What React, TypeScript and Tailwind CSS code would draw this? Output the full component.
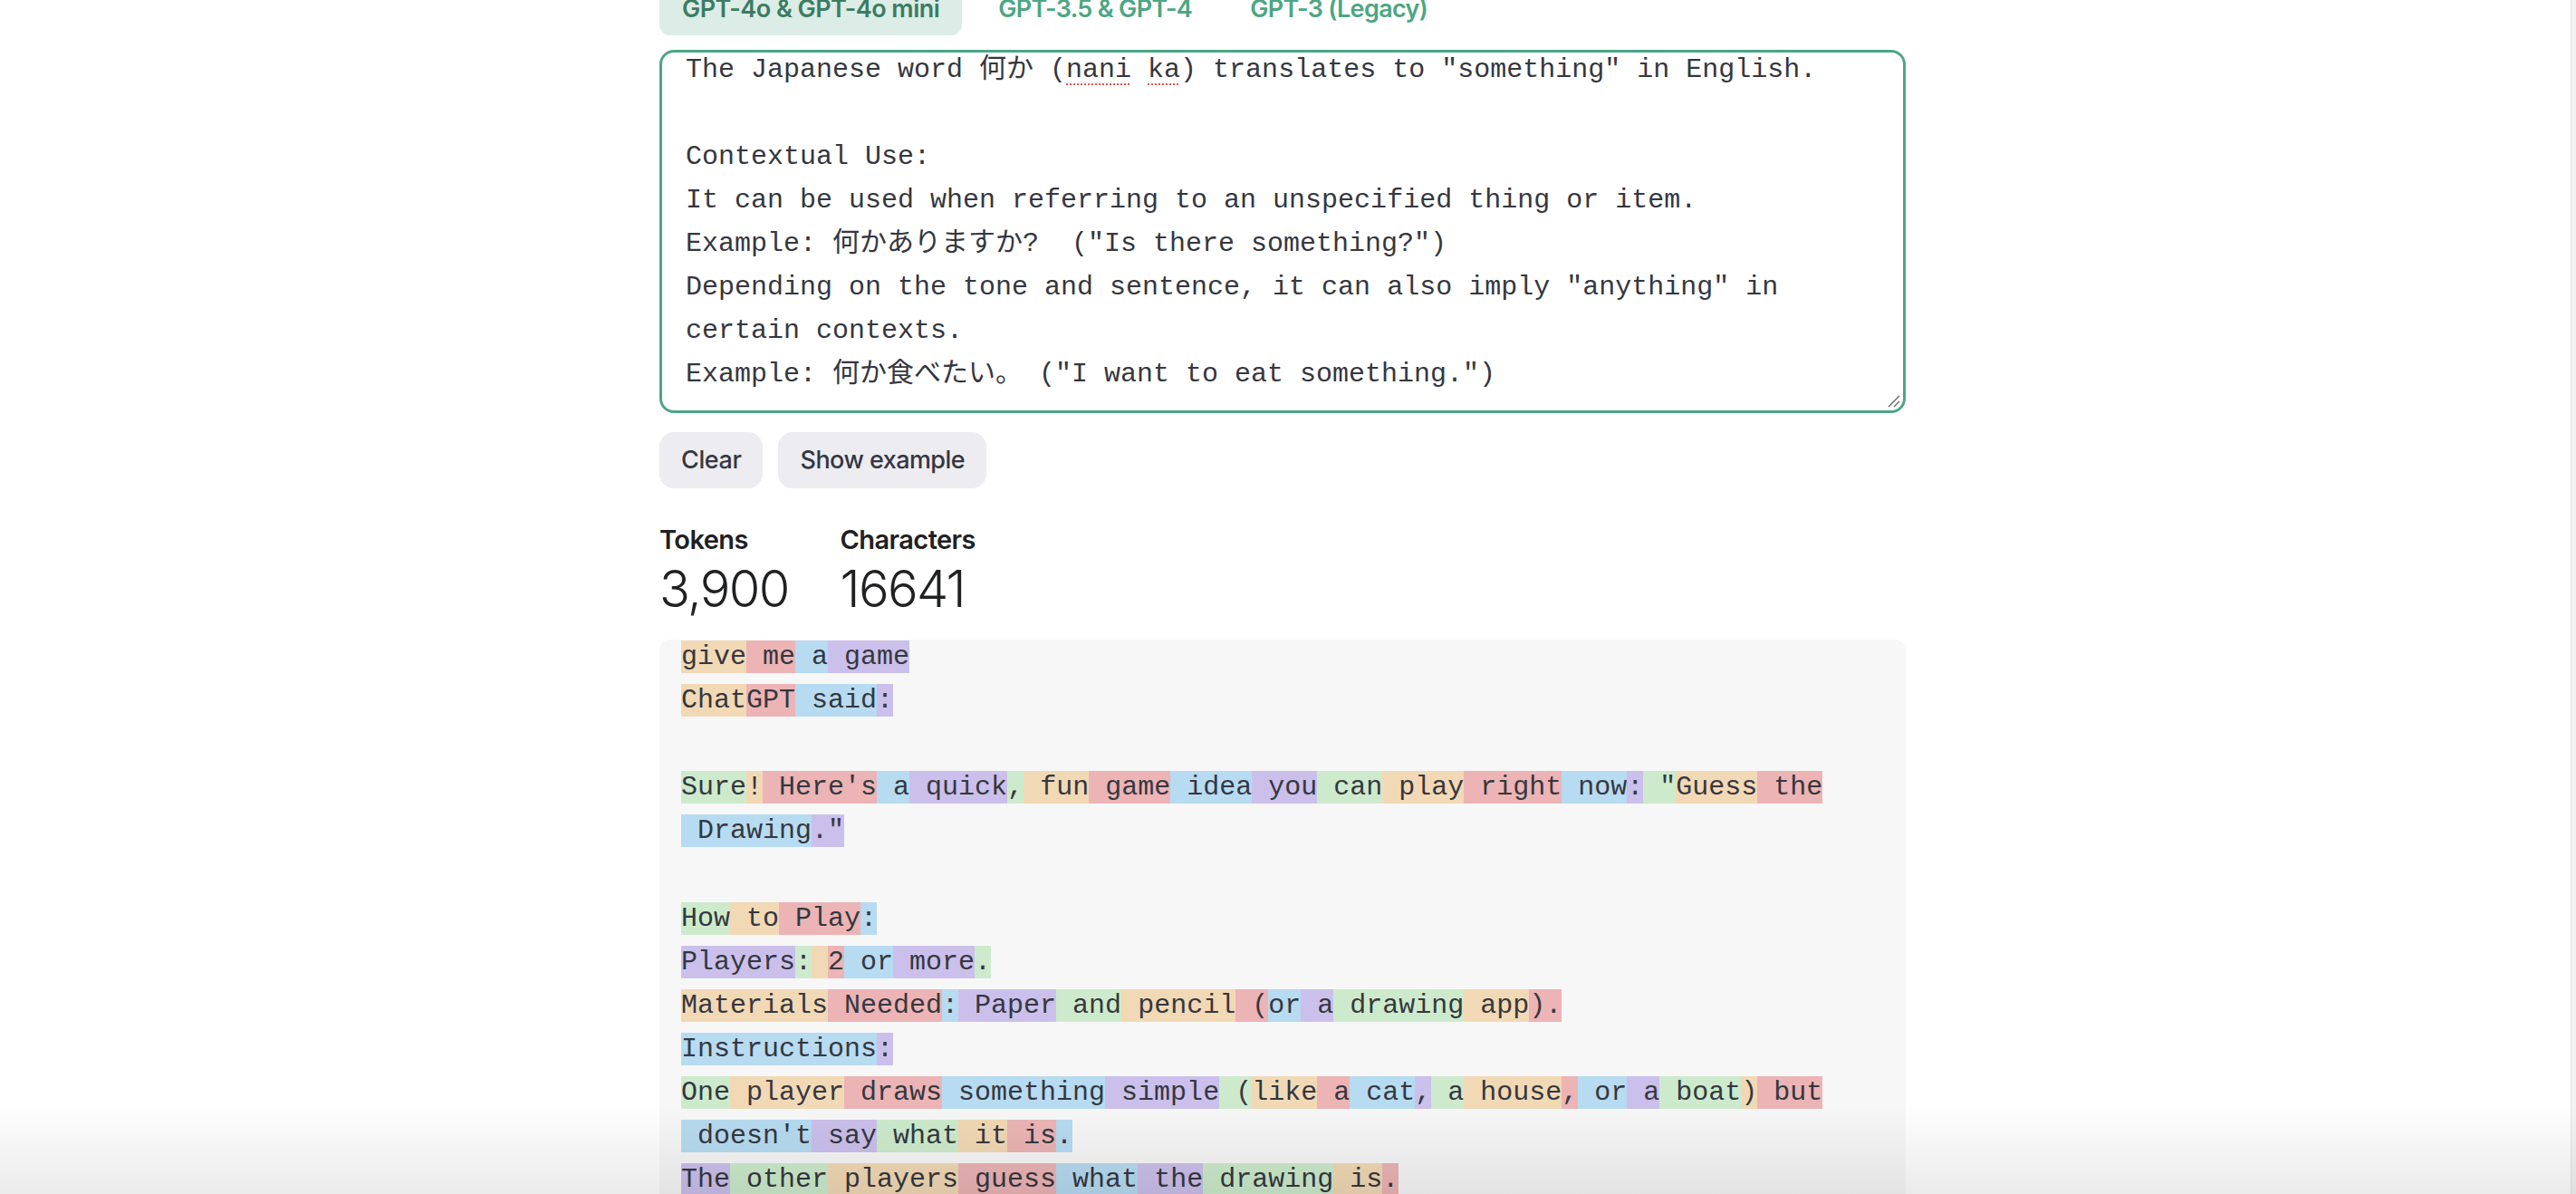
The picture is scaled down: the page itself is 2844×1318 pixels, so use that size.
import React from "react";

type Tone = "o" | "r" | "b" | "p" | "g";

const toneClass: Record<Tone, string> = {
  o: "bg-[#f2d9b5]",
  r: "bg-[#ecb4b5]",
  b: "bg-[#b7dbf1]",
  p: "bg-[#cbc0eb]",
  g: "bg-[#cdebcc]",
};

// each inner array is one paragraph of the tokenized output; null = blank line
const paragraphs: ([string, Tone][] | null)[] = [
  [["give", "o"], [" me", "r"], [" a", "b"], [" game", "p"]],
  [["Chat", "o"], ["GPT", "r"], [" said", "b"], [":", "p"]],
  null,
  [
    ["Sure", "g"], ["!", "o"], [" Here's", "r"], [" a", "b"], [" quick", "p"], [",", "g"],
    [" fun", "o"], [" game", "r"], [" idea", "b"], [" you", "p"], [" can", "g"], [" play", "o"],
    [" right", "r"], [" now", "b"], [":", "p"], [' "', "g"], ["Guess", "o"], [" the", "r"],
    [" Drawing", "b"], ['."', "p"],
  ],
  null,
  [["How", "g"], [" to", "o"], [" Play", "r"], [":", "b"]],
  [["Players", "p"], [":", "g"], [" ", "o"], ["2", "r"], [" or", "b"], [" more", "p"], [".", "g"]],
  [
    ["Materials", "o"], [" Needed", "r"], [":", "b"], [" Paper", "p"], [" and", "g"], [" pencil", "o"],
    [" (", "r"], ["or", "b"], [" a", "p"], [" drawing", "g"], [" app", "o"], [").", "r"],
  ],
  [["Instructions", "b"], [":", "p"]],
  [
    ["One", "g"], [" player", "o"], [" draws", "r"], [" something", "b"], [" simple", "p"], [" (", "g"],
    ["like", "o"], [" a", "r"], [" cat", "b"], [",", "p"], [" a", "g"], [" house", "o"], [",", "r"],
    [" or", "b"], [" a", "p"], [" boat", "g"], [")", "o"], [" but", "r"], [" doesn't", "b"],
    [" say", "p"], [" what", "g"], [" it", "o"], [" is", "r"], [".", "b"],
  ],
  [
    ["The", "p"], [" other", "g"], [" players", "o"], [" guess", "r"], [" what", "b"], [" the", "p"],
    [" drawing", "g"], [" is", "o"], [".", "r"],
  ],
];

const tabs = ["GPT-4o & GPT-4o mini", "GPT-3.5 & GPT-4", "GPT-3 (Legacy)"];

const spell = "underline decoration-dotted decoration-[#e5534b] decoration-2 underline-offset-[7px]";

function InputBox() {
  return (
    <div className="relative mt-[16px] h-[401px] w-[1376px] overflow-hidden rounded-[16px] border-[3px] border-[#4ea585] bg-white pl-[26px] pr-[26px]">
      <div className="-mt-[5px] whitespace-pre-wrap font-['Liberation_Mono','Noto_Sans_CJK_JP',monospace] text-[30px] leading-[48px] text-[#353740]">
        <div>
          The Japanese word 何か (<span className={spell}>nani</span> <span className={spell}>ka</span>) translates to "something" in English.
        </div>
        <div className="h-[48px]" />
        <div>Contextual Use:</div>
        <div>It can be used when referring to an unspecified thing or item.</div>
        <div>Example: 何かありますか?  ("Is there something?")</div>
        <div>Depending on the tone and sentence, it can also imply "anything" in certain contexts.</div>
        <div>Example: 何か食べたい。 ("I want to eat something.")</div>
      </div>
      <svg className="absolute bottom-[3px] right-[3px] h-[14px] w-[14px]" viewBox="0 0 14 14">
        <line x1="1" y1="13" x2="13" y2="1" stroke="#6b6b6b" strokeWidth="1.5" />
        <line x1="7" y1="13" x2="13" y2="7" stroke="#6b6b6b" strokeWidth="1.5" />
      </svg>
    </div>
  );
}

function TokenBox() {
  return (
    <div className="mt-[20px] h-[640px] w-[1376px] overflow-hidden rounded-[12px] bg-[#f7f7f8] px-[24px]">
      <div className="-mt-[5px] font-['Liberation_Mono',monospace] text-[30px] leading-[48.1px] text-[#353740]">
        {paragraphs.map((p, i) =>
          p === null ? (
            <div key={i} className="h-[48.1px]" />
          ) : (
            <div key={i}>
              {p.map(([text, tone], j) => (
                <span
                  key={j}
                  className={`inline-block h-[36px] whitespace-pre leading-[36px] ${toneClass[tone]}`}
                >
                  {text}
                </span>
              ))}
            </div>
          )
        )}
      </div>
    </div>
  );
}

export default function App() {
  return (
    <div className="relative flex h-[1318px] w-full overflow-hidden bg-white font-['Inter',sans-serif]">
      <div className="flex-1 pl-[728px]">
        <div className="-mt-[21px] flex gap-[16px]">
          {tabs.map((t, i) => (
            <div
              key={t}
              className={
                i === 0
                  ? "flex h-[60px] items-center rounded-[12px] bg-[#dcece6] px-[25px] pt-[2px] text-[27px] font-semibold tracking-[-0.02em] text-[#3b7c62]"
                  : "flex h-[60px] items-center rounded-[12px] px-[24px] pt-[2px] text-[27px] font-semibold tracking-[-0.025em] text-[#4ca683]"
              }
            >
              {t}
            </div>
          ))}
        </div>

        <InputBox />

        <div className="mt-[21px] flex gap-[17px]">
          <button className="h-[62px] rounded-[16px] bg-[#ececf1] px-[24px] text-[27px] font-medium tracking-[-0.015em] text-[#353740]">
            Clear
          </button>
          <button className="h-[62px] rounded-[16px] bg-[#ececf1] px-[24px] text-[27px] font-medium tracking-[-0.02em] text-[#353740]">
            Show example
          </button>
        </div>

        <div className="mt-[39px] flex gap-[57px] text-[#202123]">
          <div className="flex flex-col">
            <span className="text-[29px] font-semibold leading-[36px] tracking-[-0.02em]">Tokens</span>
            <span className="text-[56px] font-light leading-[72px] tracking-[-0.03em]">3,900</span>
          </div>
          <div className="flex flex-col">
            <span className="text-[29px] font-semibold leading-[36px] tracking-[-0.02em]">Characters</span>
            <span className="text-[56px] font-light leading-[72px] tracking-[-0.03em]">16641</span>
          </div>
        </div>

        <TokenBox />
      </div>
      <div className="w-[6px] border-l border-[#e4e4e6] bg-[#f3f3f4]" />
      <div className="pointer-events-none absolute inset-x-0 bottom-0 h-[100px] bg-linear-to-b from-transparent to-black/[0.08]" />
    </div>
  );
}
